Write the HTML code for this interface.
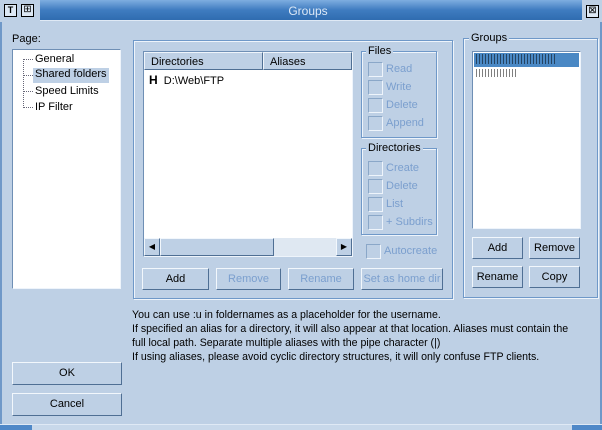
<!DOCTYPE html><html><head><style>
*{margin:0;padding:0;box-sizing:border-box}
body{width:602px;height:430px;background:#bed0e5;font-family:"Liberation Sans",sans-serif;font-size:11px;color:#000;position:relative;overflow:hidden}
.a{position:absolute}
.grp{position:absolute;border:1px solid #6f98c8;box-shadow:inset 1px 1px 0 #eef4fb,1px 1px 0 #eef4fb}
.lg{position:absolute;top:-7px;left:6px;background:#bed0e5;padding:0 2px;font-size:11px}
.btn{position:absolute;height:22px;background:#bed0e5;border:1px solid;border-color:#f2f7fc #4f6f94 #4f6f94 #f2f7fc;text-align:center;line-height:20px;font-size:11px}
.dis{color:#7b9fce}
.cb{position:absolute;color:#7b9fce;padding-left:18px;line-height:14px}
.cb:before{content:"";position:absolute;left:0;top:0;width:13px;height:13px;border:1px solid;border-color:#8aa7c8 #eef4fb #eef4fb #8aa7c8}
.box{position:absolute;background:#fff;border:1px solid;border-color:#6f8fb5 #eef4fb #eef4fb #6f8fb5}
</style></head><body>
<div class="a" style="left:0;top:0;width:602px;height:21px;background:linear-gradient(#7eaee0,#3f7cc0 50%,#2f6cb0);border-bottom:1px solid #dfe9f5"></div>
<div class="a" style="left:0;top:0;width:40px;height:21px;background:#bed0e5"></div>
<div class="a" style="left:582px;top:0;width:20px;height:21px;background:#bed0e5"></div>
<div class="a" style="left:4px;top:4px;width:13px;height:13px;border:1px solid #000;font-size:9px;font-weight:bold;text-align:center;line-height:11px;background:#dde8f4">T</div>
<div class="a" style="left:21px;top:4px;width:13px;height:13px;border:1px solid #000;font-size:10px;text-align:center;line-height:10px;background:#dde8f4">⊞</div>
<div class="a" style="left:586px;top:5px;width:13px;height:13px;border:1px solid #000;font-size:10px;text-align:center;line-height:10px;background:#dde8f4">⊠</div>
<div class="a" style="left:0;top:4px;width:602px;text-align:center;color:#dce8f6;font-size:12px;padding-left:14px">Groups</div>
<div class="a" style="left:0;top:22px;width:2px;height:408px;background:#6f98c8"></div>
<div class="a" style="left:600px;top:22px;width:2px;height:408px;background:#6f98c8"></div>
<div class="a" style="left:0;top:424px;width:602px;height:6px;background:#4f88c8;border-top:1px solid #dfe9f5"></div>
<div class="a" style="left:32px;top:425px;width:540px;height:5px;background:#c8d8ea"></div>

<div class="a" style="left:12px;top:33px">Page:</div>
<div class="box" style="left:12px;top:49px;width:109px;height:240px">
<div class="a" style="left:10px;top:9px;width:1px;height:49px;border-left:1px dotted #667"></div>
<div class="a" style="left:10px;top:9px;width:10px;border-top:1px dotted #667"></div>
<div class="a" style="left:10px;top:25px;width:10px;border-top:1px dotted #667"></div>
<div class="a" style="left:10px;top:41px;width:10px;border-top:1px dotted #667"></div>
<div class="a" style="left:10px;top:57px;width:10px;border-top:1px dotted #667"></div>
<div class="a" style="left:22px;top:3px">General</div>
<div class="a" style="left:20px;top:18px;background:#bed0e5;padding:0 2px;height:15px">Shared folders</div>
<div class="a" style="left:22px;top:35px">Speed Limits</div>
<div class="a" style="left:22px;top:51px">IP Filter</div>
</div>

<div class="grp" style="left:133px;top:40px;width:320px;height:259px"></div>
<div class="box" style="left:143px;top:51px;width:210px;height:206px">
<div class="a" style="left:0;top:0;width:208px;height:18px;background:#bed0e5"></div>
<div class="a" style="left:0;top:0;width:119px;height:18px;border:1px solid;border-color:#eef4fb #4f6f94 #4f6f94 #eef4fb;padding:3px 6px">Directories</div>
<div class="a" style="left:119px;top:0;width:89px;height:18px;border:1px solid;border-color:#eef4fb #4f6f94 #4f6f94 #eef4fb;padding:3px 6px">Aliases</div>
<div class="a" style="left:5px;top:21px"><b style="font-size:12px">H</b>&nbsp; D:\Web\FTP</div>
<div class="a" style="left:0;top:186px;width:208px;height:18px;background:#dfe8f2"></div>
<div class="btn" style="left:0;top:186px;width:16px;height:18px;line-height:16px;font-size:8px">◀</div>
<div class="btn" style="left:16px;top:186px;width:114px;height:18px"></div>
<div class="btn" style="left:192px;top:186px;width:16px;height:18px;line-height:16px;font-size:8px">▶</div>
</div>
<div class="grp" style="left:361px;top:51px;width:76px;height:87px"><span class="lg" style="left:4px">Files</span></div>
<div class="cb" style="left:368px;top:62px">Read</div>
<div class="cb" style="left:368px;top:80px">Write</div>
<div class="cb" style="left:368px;top:98px">Delete</div>
<div class="cb" style="left:368px;top:116px">Append</div>
<div class="grp" style="left:361px;top:148px;width:76px;height:87px"><span class="lg" style="left:4px">Directories</span></div>
<div class="cb" style="left:368px;top:161px">Create</div>
<div class="cb" style="left:368px;top:179px">Delete</div>
<div class="cb" style="left:368px;top:197px">List</div>
<div class="cb" style="left:368px;top:215px">+ Subdirs</div>
<div class="cb" style="left:366px;top:244px">Autocreate</div>
<div class="btn" style="left:142px;top:268px;width:67px">Add</div>
<div class="btn dis" style="left:216px;top:268px;width:65px">Remove</div>
<div class="btn dis" style="left:288px;top:268px;width:66px">Rename</div>
<div class="btn dis" style="left:361px;top:268px;width:82px;white-space:nowrap;overflow:hidden">Set as home dir</div>

<div class="grp" style="left:463px;top:38px;width:135px;height:260px"><span class="lg" style="left:5px">Groups</span></div>
<div class="box" style="left:472px;top:51px;width:109px;height:178px">
<div class="a" style="left:1px;top:1px;width:105px;height:14px;background:#4a88c4"></div>
<div class="a" style="left:3px;top:2px;width:80px;height:10px;background:repeating-linear-gradient(90deg,#000 0 1px,transparent 1px 3px);opacity:.5"></div>
<div class="a" style="left:3px;top:17px;width:40px;height:8px;background:repeating-linear-gradient(90deg,#000 0 1px,transparent 1px 3px);opacity:.5"></div>
</div>
<div class="btn" style="left:472px;top:237px;width:51px">Add</div>
<div class="btn" style="left:529px;top:237px;width:51px">Remove</div>
<div class="btn" style="left:472px;top:266px;width:51px">Rename</div>
<div class="btn" style="left:529px;top:266px;width:51px">Copy</div>

<div class="a" style="left:132px;top:308px;line-height:14px;width:445px;font-size:10.6px">You can use :u in foldernames as a placeholder for the username.<br>If specified an alias for a directory, it will also appear at that location. Aliases must contain the<br>full local path. Separate multiple aliases with the pipe character (|)</div>
<div class="a" style="left:132px;top:351px;font-size:10.6px">If using aliases, please avoid cyclic directory structures, it will only confuse FTP clients.</div>
<div class="btn" style="left:12px;top:362px;width:110px;height:23px">OK</div>
<div class="btn" style="left:12px;top:393px;width:110px;height:23px">Cancel</div>
</body></html>
